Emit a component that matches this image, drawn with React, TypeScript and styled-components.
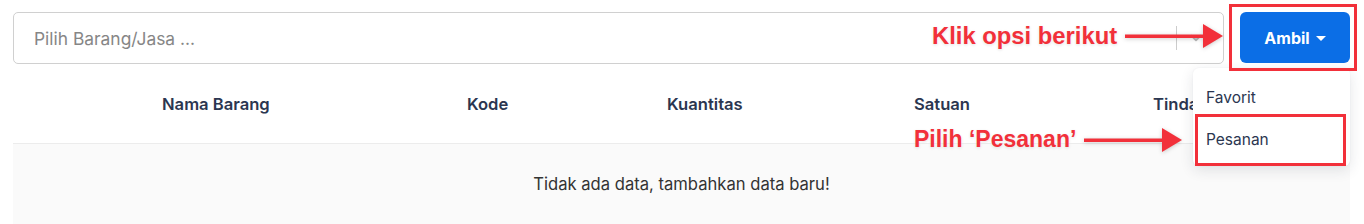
import React from "react";
import styled, { createGlobalStyle } from "styled-components";

const Global = createGlobalStyle`
  html, body { margin: 0; padding: 0; background: #ffffff; }
  body { font-family: Inter, "Noto Sans", sans-serif; overflow: hidden; }
  * { box-sizing: border-box; }
`;

const Page = styled.div`
  position: relative;
  width: 1364px;
  height: 224px;
  padding: 12px 14px 0 13px;
`;

const TopRow = styled.div`
  display: flex;
  align-items: stretch;
  gap: 16px;
  height: 52px;
`;

const SearchBox = styled.div`
  flex: 1;
  display: flex;
  align-items: center;
  border: 1px solid #d0d0d0;
  border-radius: 5px;
  padding: 0 10px 0 20px;
  background: #fff;
`;

const Placeholder = styled.span`
  flex: 1;
  font-size: 17.4px;
  color: #868686;
`;

const Separator = styled.span`
  width: 1px;
  height: 24px;
  background: #cccccc;
  margin-right: 10px;
`;

const Chevron = styled.svg`
  width: 18px;
  height: 18px;
  color: #b8b8b8;
  margin-right: 8px;
`;

const AmbilButton = styled.button`
  width: 110px;
  height: 51px;
  border: none;
  border-radius: 6px;
  background: #0b6ee6;
  color: #ffffff;
  font-family: Inter, "Noto Sans", sans-serif;
  font-size: 16px;
  font-weight: 700;
  display: flex;
  align-items: center;
  justify-content: center;
  gap: 6px;
  padding: 0;
`;

const Caret = styled.span`
  width: 0;
  height: 0;
  border-left: 5px solid transparent;
  border-right: 5px solid transparent;
  border-top: 5px solid #ffffff;
  margin-top: 1px;
`;

const Table = styled.div`
  display: flex;
  flex-direction: column;
`;

const HeaderRow = styled.div`
  display: grid;
  grid-template-columns: 305px 200px 247px 239px 1fr;
  align-items: center;
  height: 80px;
  padding-left: 149px;
  border-bottom: 1px solid #ececec;
`;

const HeaderCell = styled.div`
  font-size: 16.6px;
  font-weight: 600;
  color: #2b3650;
  white-space: nowrap;
`;

const EmptyRow = styled.div`
  height: 80px;
  display: flex;
  align-items: center;
  justify-content: center;
  background: #fafafa;
  font-size: 16.6px;
  color: #333333;
`;

const Menu = styled.div`
  position: absolute;
  left: 1193px;
  top: 68px;
  width: 157px;
  padding: 8px 0 6px;
  background: #ffffff;
  border-radius: 6px;
  box-shadow: 0 4px 14px rgba(30, 40, 60, 0.12), 0 0 2px rgba(30, 40, 60, 0.06);
`;

const MenuItem = styled.div`
  height: 42px;
  display: flex;
  align-items: center;
  padding-left: 13px;
  font-size: 15.5px;
  color: #2b3650;
`;

const Highlight = styled.div<{ $x: number; $y: number; $w: number; $h: number }>`
  position: absolute;
  left: ${(p) => p.$x}px;
  top: ${(p) => p.$y}px;
  width: ${(p) => p.$w}px;
  height: ${(p) => p.$h}px;
  border: 3px solid #f2303a;
  pointer-events: none;
`;

const Note = styled.div<{ $x: number; $y: number; $size: number }>`
  position: absolute;
  left: ${(p) => p.$x}px;
  top: ${(p) => p.$y}px;
  display: flex;
  align-items: center;
  gap: 8px;
  font-family: "Liberation Sans", Arial, sans-serif;
  font-weight: 700;
  font-size: ${(p) => p.$size}px;
  color: #f2303a;
  white-space: nowrap;
  text-shadow: 0 0 4px rgba(255, 255, 255, 0.9), 0 1px 3px rgba(0, 0, 0, 0.15);
`;

const ArrowSvg = styled.svg`
  display: block;
  overflow: visible;
  filter: drop-shadow(0 1px 2px rgba(0, 0, 0, 0.2));
`;

function Arrow({ length }: { length: number }) {
  return (
    <ArrowSvg width={length} height={24} viewBox={`0 0 ${length} 24`}>
      <rect x={0} y={10.5} width={length - 18} height={3.5} fill="#f2303a" />
      <polygon points={`${length - 20},0 ${length},12 ${length - 20},24`} fill="#f2303a" />
    </ArrowSvg>
  );
}

export default function App() {
  return (
    <>
      <Global />
      <Page>
        <TopRow>
          <SearchBox>
            <Placeholder>Pilih Barang/Jasa ...</Placeholder>
            <Separator />
            <Chevron viewBox="0 0 24 24" fill="none" stroke="currentColor" strokeWidth="2.5" strokeLinecap="round" strokeLinejoin="round">
              <polyline points="6 9 12 15 18 9" />
            </Chevron>
          </SearchBox>
          <AmbilButton>
            Ambil <Caret />
          </AmbilButton>
        </TopRow>
        <Table>
          <HeaderRow>
            <HeaderCell>Nama Barang</HeaderCell>
            <HeaderCell>Kode</HeaderCell>
            <HeaderCell>Kuantitas</HeaderCell>
            <HeaderCell>Satuan</HeaderCell>
            <HeaderCell>Tindakan</HeaderCell>
          </HeaderRow>
          <EmptyRow>Tidak ada data, tambahkan data baru!</EmptyRow>
        </Table>

        <Menu>
          <MenuItem>Favorit</MenuItem>
          <MenuItem>Pesanan</MenuItem>
        </Menu>

        <Highlight $x={1229} $y={4} $w={128} $h={67} />
        <Highlight $x={1195} $y={114} $w={151} $h={52} />

        <Note $x={932} $y={22} $size={23.8}>
          Klik opsi berikut
          <Arrow length={98} />
        </Note>
        <Note $x={914} $y={126} $size={23}>
          Pilih ‘Pesanan’
          <Arrow length={98} />
        </Note>
      </Page>
    </>
  );
}
